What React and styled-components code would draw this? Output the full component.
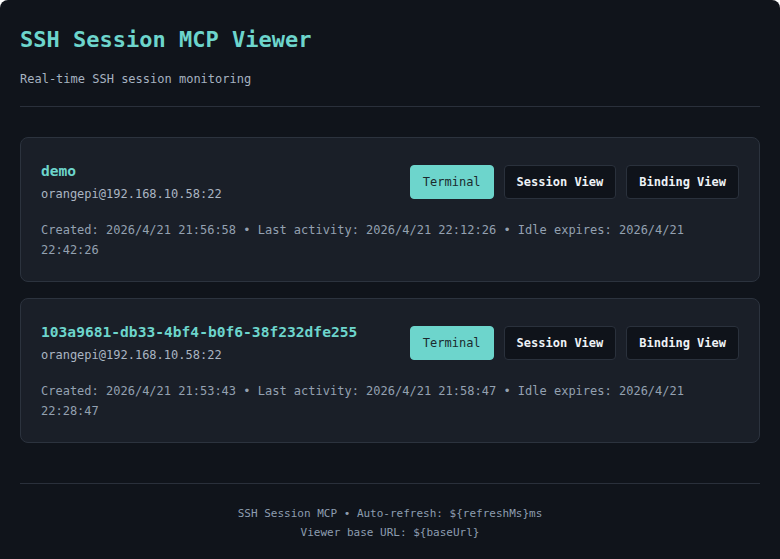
import styled, { createGlobalStyle } from "styled-components";

const GlobalStyle = createGlobalStyle`
  html, body {
    margin: 0;
    padding: 0;
    background: #ffffff;
  }
  body {
    font-family: "DejaVu Sans Mono", "Liberation Mono", monospace;
  }
`;

const Page = styled.div`
  box-sizing: border-box;
  width: 780px;
  height: 559px;
  background: #10141b;
  border-radius: 8px 8px 0 0;
  padding: 24px 20px 0;
  overflow: hidden;
`;

const Header = styled.header`
  padding-bottom: 17px;
  border-bottom: 1px solid #2a303b;
`;

const Title = styled.h1`
  margin: 0;
  font-size: 22px;
  line-height: 32px;
  font-weight: bold;
  color: #6dd5cc;
`;

const Subtitle = styled.p`
  margin: 13px 0 0;
  font-size: 12px;
  line-height: 20px;
  color: #a6b2c0;
`;

const SessionList = styled.div`
  display: flex;
  flex-direction: column;
  gap: 16px;
  margin-top: 30px;
`;

const Card = styled.div`
  background: #1a1f28;
  border: 1px solid #2c333e;
  border-radius: 8px;
  padding: 21px 20px 21px;
`;

const CardHead = styled.div`
  display: flex;
  align-items: center;
  justify-content: space-between;
`;

const Name = styled.div`
  font-size: 14.6px;
  line-height: 24px;
  font-weight: bold;
  color: #6dd5cc;
`;

const Host = styled.div`
  margin-top: 1px;
  font-size: 12px;
  line-height: 20px;
  color: #aab5c2;
`;

const Actions = styled.div`
  display: flex;
  gap: 10px;
`;

const Button = styled.button`
  height: 34px;
  padding: 0 12px;
  font-family: "DejaVu Sans Mono", "Liberation Mono", monospace;
  font-size: 12px;
  border-radius: 4px;
  cursor: pointer;
  border: 1px solid ${({ $primary }) => ($primary ? "#6dd5cc" : "#2a313c")};
  background: ${({ $primary }) => ($primary ? "#6dd5cc" : "#0f131a")};
  color: ${({ $primary }) => ($primary ? "#1b2a2e" : "#eef2f6")};
  font-weight: ${({ $primary }) => ($primary ? "normal" : "bold")};
`;

const Details = styled.div`
  margin-top: 16px;
  font-size: 12px;
  line-height: 20px;
  color: #94a1b1;
`;

const Footer = styled.footer`
  margin-top: 40px;
  padding-top: 20px;
  border-top: 1px solid #2a303b;
  text-align: center;
  font-size: 11px;
  line-height: 19px;
  color: #8d9db0;
`;

const sessions = [
  {
    name: "demo",
    host: "orangepi@192.168.10.58:22",
    created: "2026/4/21 21:56:58",
    activity: "2026/4/21 22:12:26",
    expires: "2026/4/21 22:42:26",
  },
  {
    name: "103a9681-db33-4bf4-b0f6-38f232dfe255",
    host: "orangepi@192.168.10.58:22",
    created: "2026/4/21 21:53:43",
    activity: "2026/4/21 21:58:47",
    expires: "2026/4/21 22:28:47",
  },
];

const App = () => {
  return (
    <>
      <GlobalStyle />
      <Page>
        <Header>
          <Title>SSH Session MCP Viewer</Title>
          <Subtitle>Real-time SSH session monitoring</Subtitle>
        </Header>
        <SessionList>
          {sessions.map((s) => (
            <Card key={s.name}>
              <CardHead>
                <div>
                  <Name>{s.name}</Name>
                  <Host>{s.host}</Host>
                </div>
                <Actions>
                  <Button $primary>Terminal</Button>
                  <Button>Session View</Button>
                  <Button>Binding View</Button>
                </Actions>
              </CardHead>
              <Details>
                {`Created: ${s.created} • Last activity: ${s.activity} • Idle expires: ${s.expires}`}
              </Details>
            </Card>
          ))}
        </SessionList>
        <Footer>
          <div>{"SSH Session MCP • Auto-refresh: ${refreshMs}ms"}</div>
          <div>{"Viewer base URL: ${baseUrl}"}</div>
        </Footer>
      </Page>
    </>
  );
};

export default App;
